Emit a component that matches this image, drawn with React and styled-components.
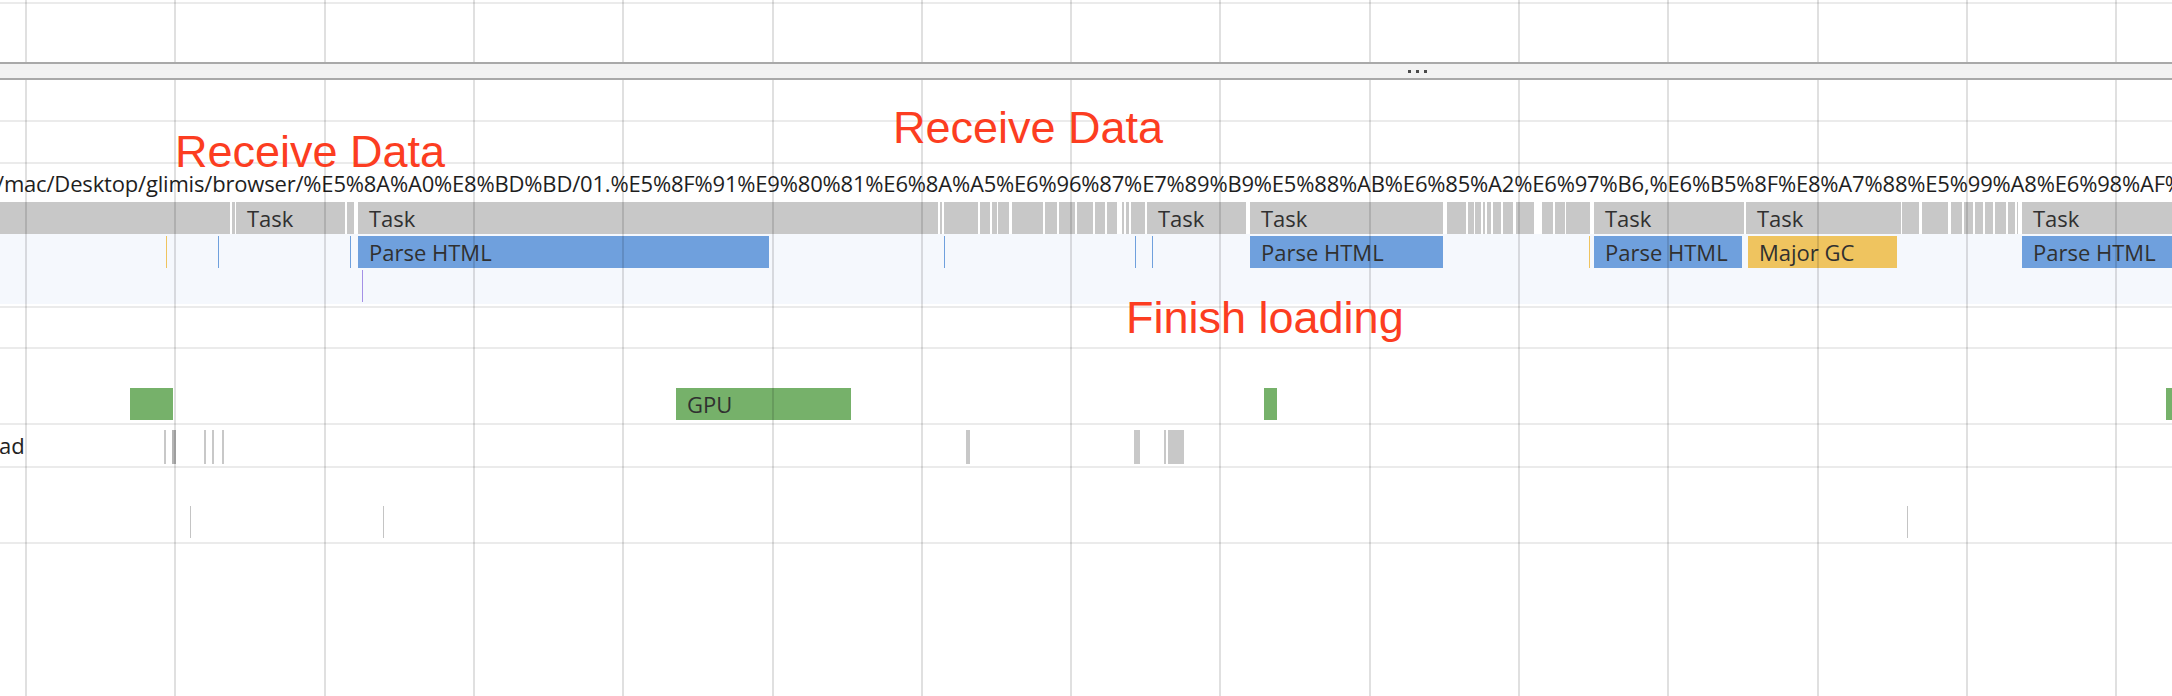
import React from 'react';
import styled, {createGlobalStyle} from 'styled-components';

const GlobalStyle = createGlobalStyle`
    html, body {
        margin: 0;
        padding: 0;
        background: #fff;
    }
    body {
        font-family: "Open Sans", "Liberation Sans", sans-serif;
        color: #222;
    }
`;

// timeline data, in px of the visible window
const gridXs = Array.from({length: 15}, (_, i) => 25 + i * 149.3);

const tasks = [
    [0, 230], [232, 235], [236, 345, 'Task'], [347, 354], [358, 938, 'Task'],
    [940, 942], [944, 978], [980, 990], [992, 997], [998, 1009], [1012, 1043],
    [1045, 1057], [1059, 1075], [1077, 1093], [1095, 1105], [1107, 1117],
    [1122, 1124], [1126, 1129], [1131, 1145], [1147, 1246, 'Task'],
    [1250, 1443, 'Task'], [1447, 1466], [1468, 1474], [1475, 1481], [1483, 1485],
    [1487, 1491], [1493, 1501], [1503, 1513], [1516, 1534], [1542, 1553],
    [1555, 1565], [1566, 1590], [1594, 1744, 'Task'], [1746, 1901, 'Task'],
    [1902, 1919], [1922, 1948], [1951, 1962], [1964, 1973], [1975, 1983],
    [1985, 1993], [1995, 2006], [2008, 2015], [2017, 2018], [2022, 2172, 'Task'],
];

const events = [
    [358, 769, 'Parse HTML', '#6fa0dd'],
    [1250, 1443, 'Parse HTML', '#6fa0dd'],
    [1594, 1742, 'Parse HTML', '#6fa0dd'],
    [1748, 1897, 'Major GC', '#efc45f'],
    [2022, 2172, 'Parse HTML', '#6fa0dd'],
];

const marks = [
    [166, '#efc45f'], [218, '#6fa0dd'], [350, '#6fa0dd'], [944, '#6fa0dd'],
    [1135, '#6fa0dd'], [1152, '#6fa0dd'], [1589, '#efc45f'],
];

const gpu = [[130, 173], [676, 851, 'GPU'], [1264, 1277], [2166, 2172]];

const threadBits = [
    [164, 166, '#c8c8c8'], [172, 176, '#b4b4b4'], [204, 206, '#c8c8c8'],
    [212, 214, '#c8c8c8'], [222, 224, '#c8c8c8'], [966, 970, '#c8c8c8'],
    [1134, 1140, '#c8c8c8'], [1164, 1166, '#c8c8c8'], [1168, 1184, '#c8c8c8'],
];

const ticks = [190, 383, 1907];

const url = '/mac/Desktop/glimis/browser/%E5%8A%A0%E8%BD%BD/01.%E5%8F%91%E9%80%81%E6%8A%A5%E6%96%87%E7%89%B9%E5%88%AB%E6%85%A2%E6%97%B6,%E6%B5%8F%E8%A7%88%E5%99%A8%E6%98%AF%E5%A6%82%E4%BD%95%E5%B7%A5%E4%BD%9C%E7%9A%84.html';

const Grid = () => (
    <GridLayer>
        {gridXs.map(x => (
            <GridLine key={x} style={{left: Math.round(x)}} />
        ))}
    </GridLayer>
);

const App = () => {
    return (
        <>
        <GlobalStyle />
        <Page>
            <Overview>
                <Rule />
                <Grid />
            </Overview>

            <Splitter>
                <Dot /><Dot /><Dot />
            </Splitter>

            <Tracks>
                <Blank $h={40} />
                <Rule />
                <Blank $h={40} />
                <Rule />

                <UrlRow>{url}</UrlRow>

                <Lane $h={32}>
                    {tasks.map(([a, b, label]) => (
                        <Slice key={a} $color="#c8c8c8" style={{left: a, width: b - a}}>
                            {label && <SliceLabel>{label}</SliceLabel>}
                        </Slice>
                    ))}
                </Lane>

                <FrameArea>
                    <Lane $h={32}>
                        {marks.map(([x, c]) => (
                            <Mark key={x} $color={c} style={{left: x}} />
                        ))}
                        {events.map(([a, b, label, c]) => (
                            <Slice key={a} $color={c} style={{left: a, width: b - a}}>
                                <SliceLabel>{label}</SliceLabel>
                            </Slice>
                        ))}
                    </Lane>
                    <Lane $h={36}>
                        <Mark $color="#a490e6" $top={2} style={{left: 362, height: 32}} />
                    </Lane>
                </FrameArea>

                <Blank $h={2} />
                <Rule />
                <Blank $h={39} />
                <Rule />

                <Lane $h={74}>
                    {gpu.map(([a, b, label]) => (
                        <Slice key={a} $color="#76b16a" $top={39} style={{left: a, width: b - a}}>
                            {label && <SliceLabel>{label}</SliceLabel>}
                        </Slice>
                    ))}
                </Lane>
                <Rule />

                <Lane $h={41}>
                    <TrackName>ad</TrackName>
                    {threadBits.map(([a, b, c]) => (
                        <Slice key={a} $color={c} $top={5} $height={34} style={{left: a, width: b - a}} />
                    ))}
                </Lane>
                <Rule />

                <Lane $h={74}>
                    {ticks.map(x => (
                        <Mark key={x} $color="#c4c4c4" $top={38} style={{left: x, height: 32}} />
                    ))}
                </Lane>
                <Rule />

                <Grid />

                <Note $left={175} $top={49}>Receive Data</Note>
                <Note $left={893} $top={25}>Receive Data</Note>
                <Note $left={1126} $top={215}>Finish loading</Note>
            </Tracks>
        </Page>
        </>
    )
}

const Page = styled.div`
    position: relative;
    width: 2172px;
    height: 696px;
    overflow: hidden;
    background: #fff;
    display: flex;
    flex-direction: column;
`;
const Overview = styled.div`
    position: relative;
    flex-shrink: 0;
    height: 62px;
    padding-top: 2px;
    box-sizing: border-box;
`;
const Splitter = styled.div`
    flex-shrink: 0;
    height: 14px;
    border-top: 2px solid #a9a9a9;
    border-bottom: 2px solid #a9a9a9;
    background: #f2f2f2;
    display: flex;
    align-items: center;
    gap: 5px;
    padding-left: 1408px;
`;
const Dot = styled.span`
    width: 3px;
    height: 3px;
    background: #4a4a4a;
`;
const Tracks = styled.div`
    position: relative;
    flex: 1;
    display: flex;
    flex-direction: column;
`;
const Blank = styled.div`
    flex-shrink: 0;
    height: ${p => p.$h}px;
`;
const Rule = styled.div`
    flex-shrink: 0;
    height: 2px;
    background: #ebebeb;
`;
const UrlRow = styled.div`
    flex-shrink: 0;
    height: 38px;
    line-height: 38px;
    margin-left: -4px;
    font-size: 22px;
    letter-spacing: -0.18px;
    color: #1e1e1e;
    white-space: nowrap;
    overflow: hidden;
`;
const Lane = styled.div`
    position: relative;
    flex-shrink: 0;
    height: ${p => p.$h}px;
`;
const FrameArea = styled.div`
    flex-shrink: 0;
    height: 70px;
    padding-top: 2px;
    box-sizing: border-box;
    background: #f5f8fd;
`;
const Slice = styled.div`
    position: absolute;
    top: ${p => p.$top || 0}px;
    height: ${p => p.$height || 32}px;
    background: ${p => p.$color};
    overflow: hidden;
`;
const SliceLabel = styled.span`
    display: block;
    padding-left: 11px;
    color: #303030;
    font-size: 22px;
    line-height: 32px;
    white-space: nowrap;
`;
const Mark = styled.div`
    position: absolute;
    top: ${p => p.$top || 0}px;
    width: 1px;
    height: 32px;
    background: ${p => p.$color};
`;
const TrackName = styled.div`
    font-size: 22px;
    line-height: 41px;
    color: #222;
    margin-left: -1px;
`;
const GridLayer = styled.div`
    position: absolute;
    inset: 0;
    pointer-events: none;
`;
const GridLine = styled.div`
    position: absolute;
    top: 0;
    bottom: 0;
    width: 2px;
    background: rgba(0, 0, 0, 0.12);
`;
const Note = styled.div`
    position: absolute;
    left: ${p => p.$left}px;
    top: ${p => p.$top}px;
    font-family: "Liberation Sans", Arial, sans-serif;
    font-size: 45px;
    line-height: 1;
    color: #fc3d21;
    white-space: nowrap;
`;

export default App;
